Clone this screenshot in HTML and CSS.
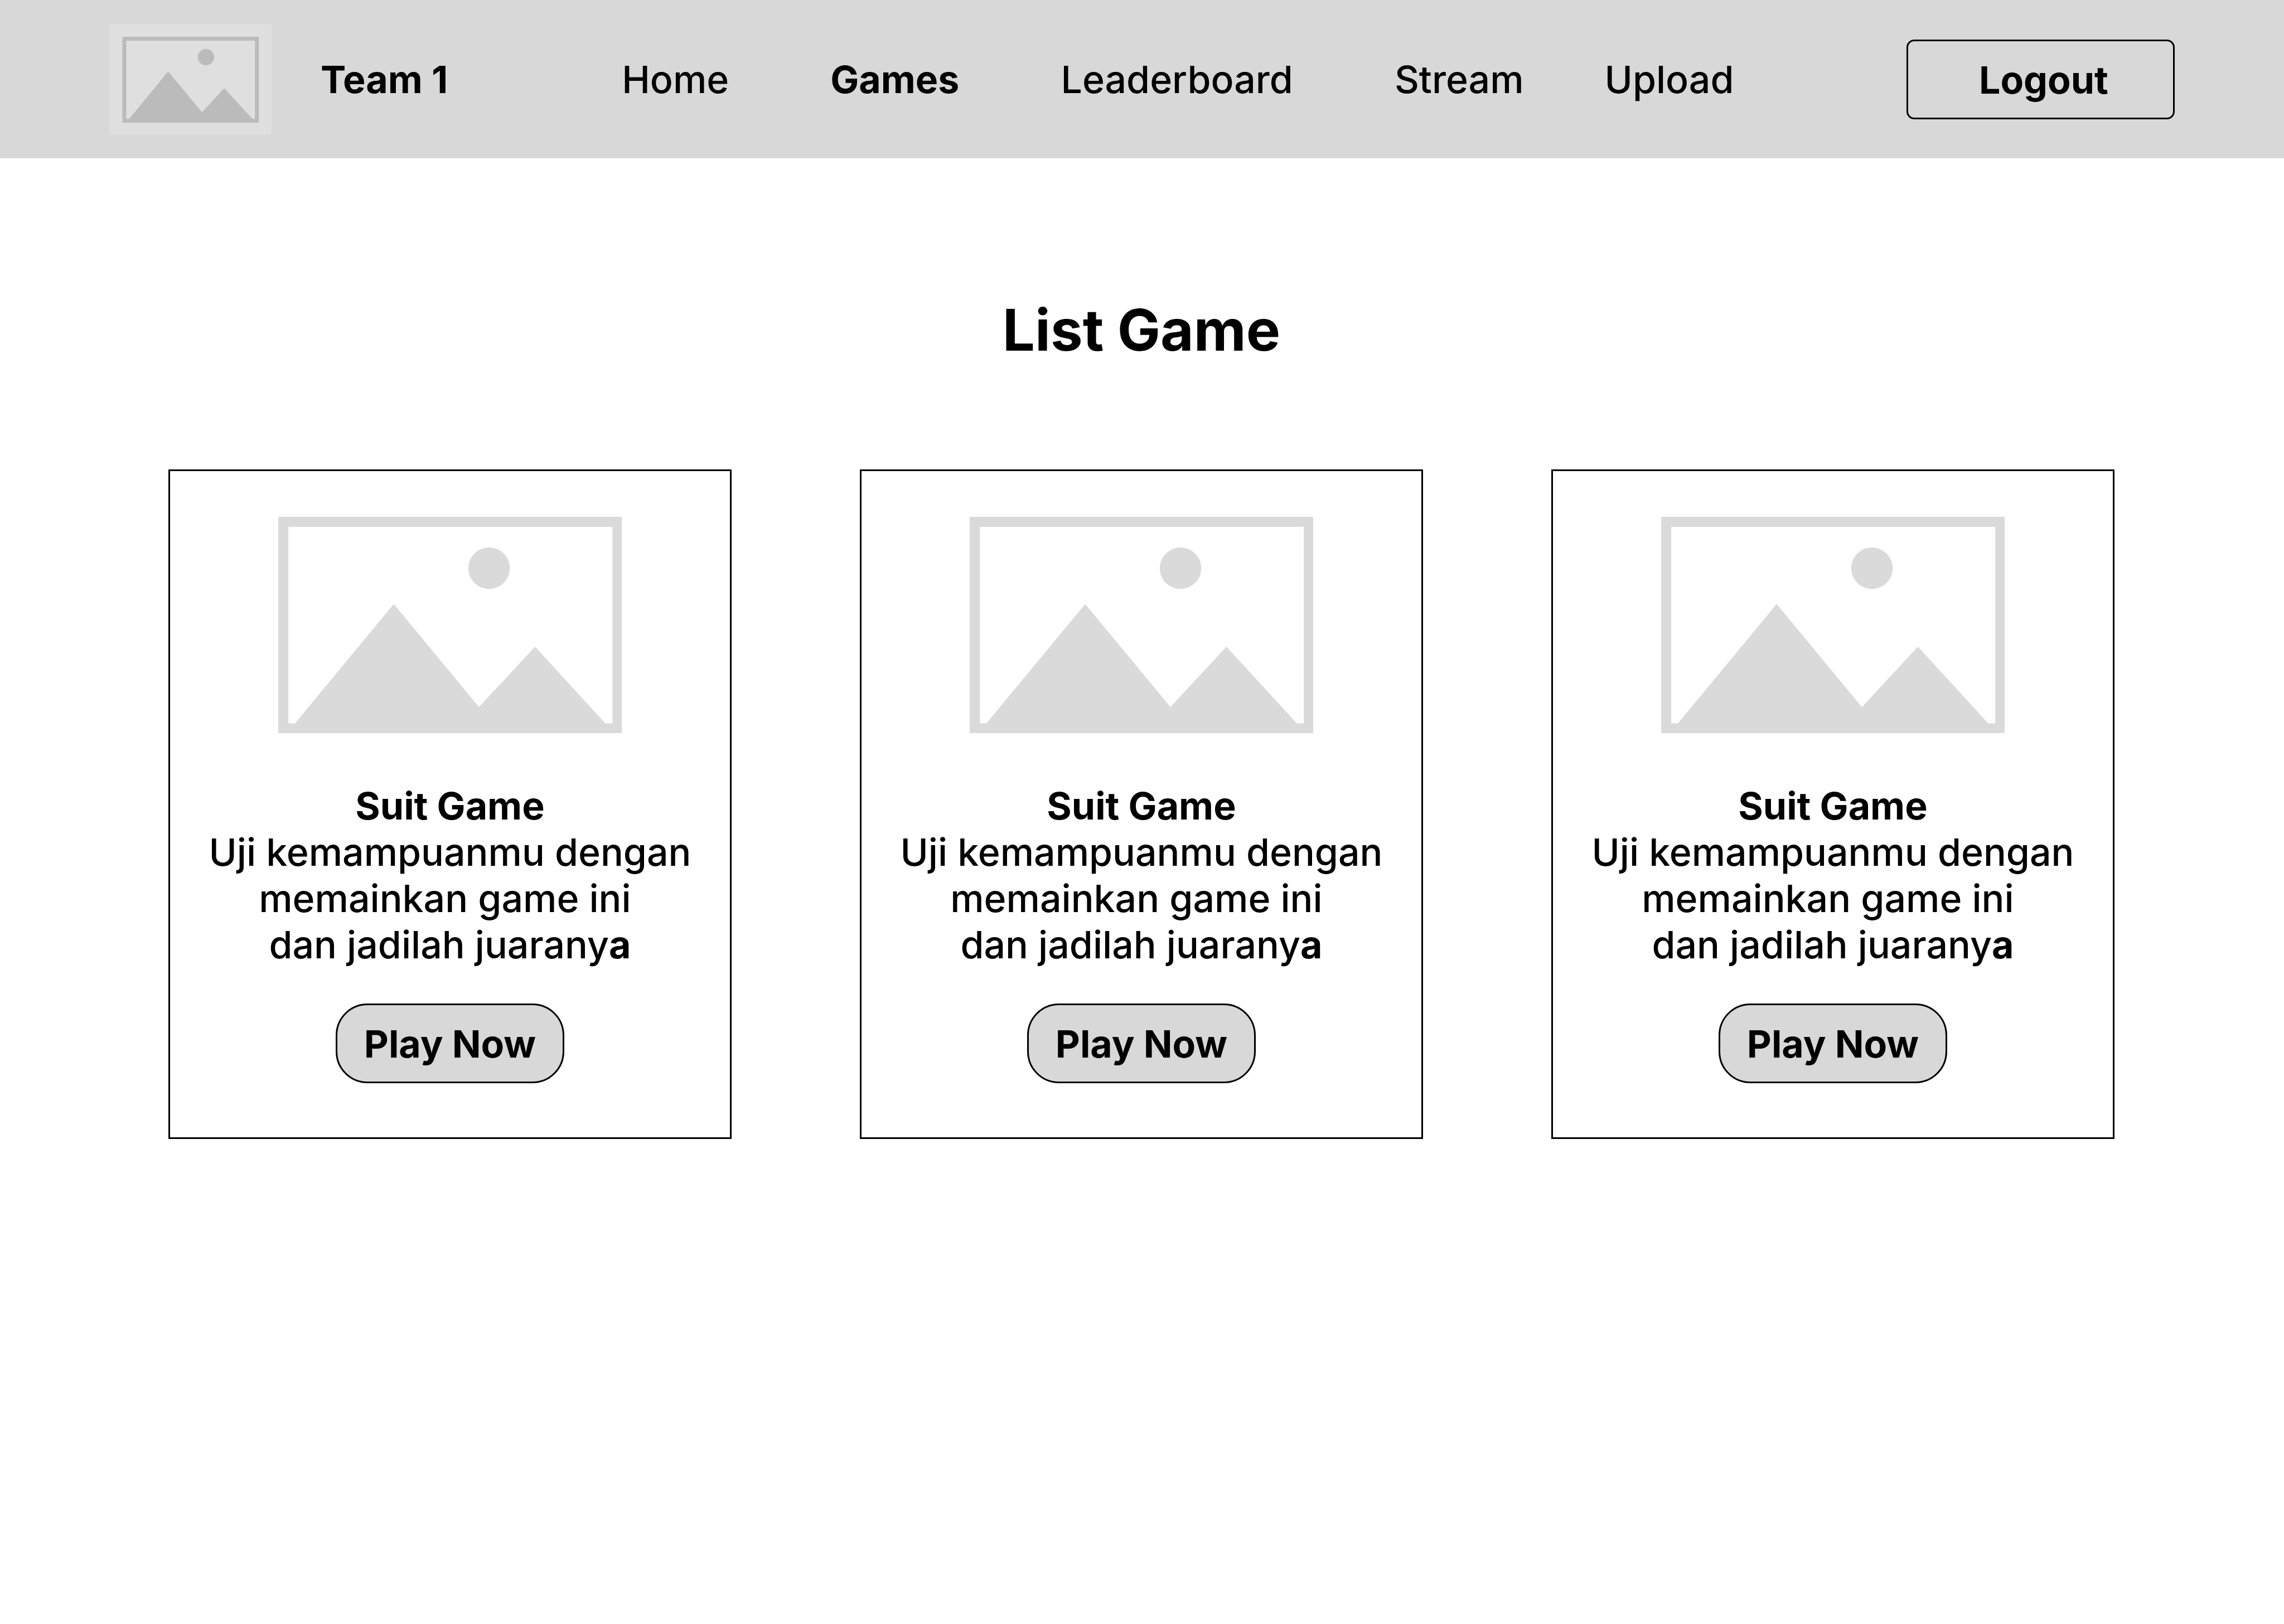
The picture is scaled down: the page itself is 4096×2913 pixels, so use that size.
FILE: index.html
```html
<!DOCTYPE html>
<html lang="id">
<head>
  <meta charset="utf-8">
  <meta name="viewport" content="width=device-width, initial-scale=1">
  <title>List Game</title>
  <link rel="stylesheet" href="styles.css">
</head>
<body>
  <header class="topbar">
    <a class="brand" href="#">
      <svg class="brand-logo" viewBox="0 0 427 291" preserveAspectRatio="none" aria-hidden="true">
        <rect width="427" height="291" fill="#dfdfdf"/>
        <path fill="#bbb" fill-rule="evenodd" d="M34.4 33.7H393.4V259H34.4ZM44.6 44V249H383.3V44Z"/>
        <circle cx="254.4" cy="87" r="21.4" fill="#bbb"/>
        <path fill="#bbb" d="M51.5 250L154.9 124.7L244.2 231.7L302.3 168.7L377.8 250Z"/>
      </svg>
      <span class="brand-name">Team 1</span>
    </a>
    <nav class="menu">
      <a class="menu-link" href="#">Home</a>
      <a class="menu-link menu-link-active" href="#" aria-current="page">Games</a>
      <a class="menu-link" href="#">Leaderboard</a>
      <span class="menu-group">
        <a class="menu-link" href="#">Stream</a>
        <a class="menu-link" href="#">Upload</a>
      </span>
    </nav>
    <button class="logout" type="button">Logout</button>
  </header>

  <main class="content">
    <h1 class="title">List Game</h1>
    <div class="games">
      <article class="card">
        <svg class="card-image" viewBox="0 0 901 568" preserveAspectRatio="none" aria-hidden="true">
          <path fill-rule="evenodd" d="M0 0H901V568H0ZM26.5 26.5V542.4H876.5V26.5Z"/>
          <circle cx="553" cy="135" r="54.5"/>
          <path d="M43 543.5L303 229L526.5 499.4L673.5 341L859 543.5Z"/>
        </svg>
        <h2 class="card-title">Suit Game</h2>
        <p class="card-text">Uji kemampuanmu dengan<br>memainkan game ini&nbsp;<br>dan jadilah juarany<b>a</b></p>
        <button class="play" type="button">Play Now</button>
      </article>
      <article class="card">
        <svg class="card-image" viewBox="0 0 901 568" preserveAspectRatio="none" aria-hidden="true">
          <path fill-rule="evenodd" d="M0 0H901V568H0ZM26.5 26.5V542.4H876.5V26.5Z"/>
          <circle cx="553" cy="135" r="54.5"/>
          <path d="M43 543.5L303 229L526.5 499.4L673.5 341L859 543.5Z"/>
        </svg>
        <h2 class="card-title">Suit Game</h2>
        <p class="card-text">Uji kemampuanmu dengan<br>memainkan game ini&nbsp;<br>dan jadilah juarany<b>a</b></p>
        <button class="play" type="button">Play Now</button>
      </article>
      <article class="card">
        <svg class="card-image" viewBox="0 0 901 568" preserveAspectRatio="none" aria-hidden="true">
          <path fill-rule="evenodd" d="M0 0H901V568H0ZM26.5 26.5V542.4H876.5V26.5Z"/>
          <circle cx="553" cy="135" r="54.5"/>
          <path d="M43 543.5L303 229L526.5 499.4L673.5 341L859 543.5Z"/>
        </svg>
        <h2 class="card-title">Suit Game</h2>
        <p class="card-text">Uji kemampuanmu dengan<br>memainkan game ini&nbsp;<br>dan jadilah juarany<b>a</b></p>
        <button class="play" type="button">Play Now</button>
      </article>
    </div>
  </main>
</body>
</html>
```

FILE: styles.css
```css
* {
  box-sizing: border-box;
}

body {
  margin: 0;
  background: #fff;
  color: #000;
  font-family: Inter, "Liberation Sans", sans-serif;
  font-size: 68px;
  font-weight: 500;
  font-optical-sizing: none;
  line-height: 83px;
}

button {
  margin: 0;
  color: inherit;
  font: inherit;
  font-optical-sizing: none;
  font-weight: 700;
  cursor: pointer;
}

a {
  color: inherit;
  text-decoration: none;
}

/* Top bar */
.topbar {
  display: flex;
  align-items: center;
  padding: 43px 196px 42px;
  background: #d8d8d8;
  white-space: nowrap;
}

.brand {
  display: flex;
  align-items: center;
  gap: 88px;
}

.brand-logo {
  display: block;
  width: 291px;
  height: 199px;
}

.brand-name {
  font-weight: 700;
}

.menu {
  display: flex;
  gap: 182px;
  margin-left: 312px;
}

.menu-group {
  display: flex;
  gap: 145px;
}

.menu-link-active {
  font-weight: 700;
}

.logout {
  width: 481px;
  margin-left: auto;
  padding: 28px 0 26px 11px;
  border: 3px solid #000;
  border-radius: 14px;
  background: none;
}

/* Game list */
.content {
  padding: 246px 304px 246px 302px;
}

.title {
  margin: 0 0 188px;
  font-size: 103px;
  font-weight: 700;
  line-height: 124px;
  text-align: center;
}

.games {
  display: grid;
  grid-template-columns: repeat(3, 1fr);
  gap: 230px;
}

.card {
  display: flex;
  flex-direction: column;
  align-items: center;
  padding: 82px 0 97px;
  border: 3px solid #000;
  text-align: center;
}

.card-image {
  display: block;
  width: 616px;
  height: 388px;
  margin-bottom: 89px;
  fill: #dadada;
}

.card-title {
  margin: 0;
  font-size: 68px;
  font-weight: 700;
}

.card-text {
  margin: 0 0 64px;
}

.play {
  width: 410px;
  padding: 28px 0 26px;
  border: 3px solid #000;
  border-radius: 57px;
  background: #d8d8d8;
}
```
